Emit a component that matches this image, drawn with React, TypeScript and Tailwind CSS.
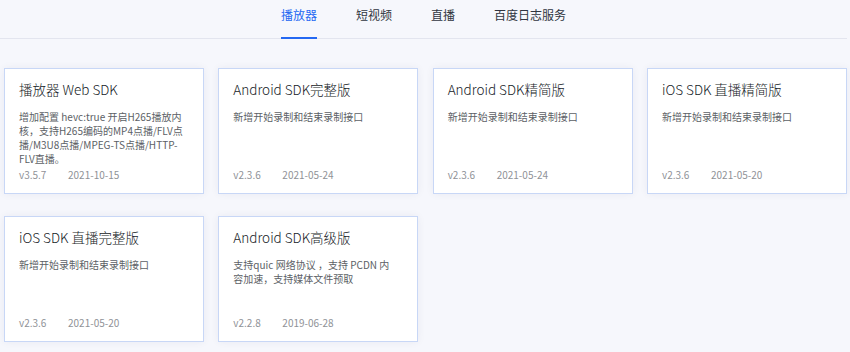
import React from "react";

type Item = { title: string; desc: React.ReactNode; version: string; date: string };

const items: Item[] = [
  {
    title: "播放器 Web SDK",
    desc: (
      <>
        增加配置 hevc:true 开启H265播放内
        <br />
        核，支持H265编码的MP4点播/FLV点
        <br />
        播/M3U8点播/MPEG-TS点播/HTTP-
        <br />
        FLV直播。
      </>
    ),
    version: "v3.5.7",
    date: "2021-10-15",
  },
  { title: "Android SDK完整版", desc: "新增开始录制和结束录制接口", version: "v2.3.6", date: "2021-05-24" },
  { title: "Android SDK精简版", desc: "新增开始录制和结束录制接口", version: "v2.3.6", date: "2021-05-24" },
  { title: "iOS SDK 直播精简版", desc: "新增开始录制和结束录制接口", version: "v2.3.6", date: "2021-05-20" },
  { title: "iOS SDK 直播完整版", desc: "新增开始录制和结束录制接口", version: "v2.3.6", date: "2021-05-20" },
  {
    title: "Android SDK高级版",
    desc: (
      <>
        支持quic 网络协议 ，支持 PCDN 内
        <br />
        容加速，支持媒体文件预取
      </>
    ),
    version: "v2.2.8",
    date: "2019-06-28",
  },
];

const tabs = ["播放器", "短视频", "直播", "百度日志服务"];

function Card({ item }: { item: Item }) {
  return (
    <div className="flex h-[126px] flex-col border border-[#c8d7f6] bg-white px-[14px] pt-[10px] pb-[11px] shadow-[0_0_8px_rgba(30,40,80,0.06)]">
      <div className="whitespace-nowrap text-[13.5px] font-light leading-[20px] text-[#151a26]">{item.title}</div>
      <div className="mt-[11px] flex-1 whitespace-nowrap text-[10px] leading-[14px] text-[#5c5f66]">{item.desc}</div>
      <div className="flex text-[10px] leading-[14px] text-[#8f9297]">
        <span className="w-[49px]">{item.version}</span>
        <span>{item.date}</span>
      </div>
    </div>
  );
}

export default function App() {
  return (
    <div
      className="h-[352px] w-[850px] overflow-hidden bg-[#f6f7fc]"
      style={{ fontFamily: '"Noto Sans CJK SC", "Noto Sans", sans-serif' }}
    >
      <div className="mr-[3px] flex h-[39px] justify-center gap-[39px] border-b border-[#e3e5ef]">
        {tabs.map((t, i) => (
          <div
            key={t}
            className={
              i === 0
                ? "relative pt-[7px] text-[12px] leading-[16px] text-[#2468f2]"
                : "relative pt-[7px] text-[12px] leading-[16px] text-[#303540]"
            }
          >
            {t}
            {i === 0 && <div className="absolute bottom-[-1px] left-0 right-0 h-[2px] bg-[#2468f2]" />}
          </div>
        ))}
      </div>
      <div className="grid grid-cols-[repeat(4,200px)] gap-x-[14.33px] gap-y-[22px] pt-[29px] pl-[4px]">
        {items.map((it) => (
          <Card key={it.title} item={it} />
        ))}
      </div>
    </div>
  );
}
